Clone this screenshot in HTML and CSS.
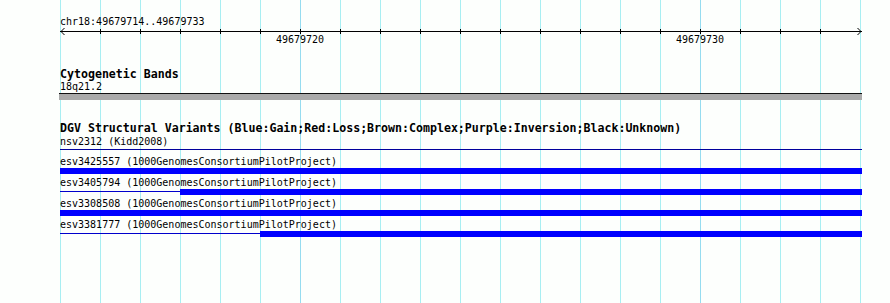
FILE: index.html
```html
<!DOCTYPE html>
<html>
<head>
<meta charset="utf-8">
<link rel="stylesheet" href="styles.css">
</head>
<body>
<div class="view">
  <div class="content">
    <div class="loc">chr18:49679714..49679733</div>
    <svg class="ruler" width="803" height="8" viewBox="0 0 803 8">
      <line x1="0" y1="4.5" x2="802" y2="4.5" stroke="#000" stroke-width="1"/>
      <polyline points="4.5,1 1,4.5 4.5,8" fill="none" stroke="#000" stroke-width="1"/>
      <polyline points="797.5,1 801,4.5 797.5,8" fill="none" stroke="#000" stroke-width="1"/>
      <g stroke="#000" stroke-width="1">
        <line x1="40.5" y1="2" x2="40.5" y2="7"/>
        <line x1="80.5" y1="2" x2="80.5" y2="7"/>
        <line x1="120.5" y1="2" x2="120.5" y2="7"/>
        <line x1="160.5" y1="2" x2="160.5" y2="7"/>
        <line x1="200.5" y1="2" x2="200.5" y2="7"/>
        <line x1="240.5" y1="2" x2="240.5" y2="7"/>
        <line x1="280.5" y1="2" x2="280.5" y2="7"/>
        <line x1="320.5" y1="2" x2="320.5" y2="7"/>
        <line x1="360.5" y1="2" x2="360.5" y2="7"/>
        <line x1="400.5" y1="2" x2="400.5" y2="7"/>
        <line x1="440.5" y1="2" x2="440.5" y2="7"/>
        <line x1="480.5" y1="2" x2="480.5" y2="7"/>
        <line x1="520.5" y1="2" x2="520.5" y2="7"/>
        <line x1="560.5" y1="2" x2="560.5" y2="7"/>
        <line x1="600.5" y1="2" x2="600.5" y2="7"/>
        <line x1="640.5" y1="2" x2="640.5" y2="7"/>
        <line x1="680.5" y1="2" x2="680.5" y2="7"/>
        <line x1="720.5" y1="2" x2="720.5" y2="7"/>
        <line x1="760.5" y1="2" x2="760.5" y2="7"/>
      </g>
    </svg>
    <div class="labels">
      <span class="tick-label first">49679720</span>
      <span class="tick-label second">49679730</span>
    </div>

    <div class="track-title cyto">Cytogenetic Bands</div>
    <div class="label">18q21.2</div>
    <div class="band"></div>

    <div class="track-title dgv">DGV Structural Variants (Blue:Gain;Red:Loss;Brown:Complex;Purple:Inversion;Black:Unknown)</div>

    <div class="feat nsv">
      <div class="label">nsv2312 (Kidd2008)</div>
      <div class="glyph"><div class="thin dark full"></div></div>
    </div>

    <div class="feat">
      <div class="label">esv3425557 (1000GenomesConsortiumPilotProject)</div>
      <div class="glyph gap"><div class="thick"></div></div>
    </div>

    <div class="feat">
      <div class="label">esv3405794 (1000GenomesConsortiumPilotProject)</div>
      <div class="glyph gap"><div class="thin" style="width:120px"></div><div class="thick"></div></div>
    </div>

    <div class="feat">
      <div class="label">esv3308508 (1000GenomesConsortiumPilotProject)</div>
      <div class="glyph gap"><div class="thick"></div></div>
    </div>

    <div class="feat">
      <div class="label">esv3381777 (1000GenomesConsortiumPilotProject)</div>
      <div class="glyph gap"><div class="thin" style="width:200px"></div><div class="thick"></div></div>
    </div>
  </div>
</div>
</body>
</html>
```

FILE: styles.css
```css
html, body {
  margin: 0;
  padding: 0;
  background: #fdfffd;
}

.view {
  width: 890px;
  height: 303px;
  overflow: hidden;
  padding-top: 16px;
  box-sizing: border-box;
  background-color: #fdfffd;
  background-image:
    linear-gradient(to right, #96dcf0 0 1px, transparent 1px),
    linear-gradient(to right, #96dcf0 0 1px, transparent 1px),
    repeating-linear-gradient(to right, #a8eef2 0 1px, transparent 1px 40px);
  background-repeat: no-repeat;
  background-size: 1px 100%, 1px 100%, 801px 100%;
  background-position: 300px 0, 700px 0, 60px 0;
  font-family: "DejaVu Sans Mono", monospace;
  font-size: 10px;
  color: #000;
}

.content {
  margin-left: 60px;
  width: 802px;
}

.loc {
  line-height: 11px;
  height: 11px;
  white-space: nowrap;
}

.ruler {
  display: block;
  overflow: visible;
}

.labels {
  display: grid;
  grid-template-columns: repeat(20, 40px);
  line-height: 11px;
  height: 11px;
  margin-top: -1px;
}

.tick-label {
  text-align: center;
  white-space: nowrap;
}

.tick-label.first {
  grid-column: 6 / 8;
}

.tick-label.second {
  grid-column: 16 / 18;
}

.track-title {
  font-weight: bold;
  font-size: 11.6px;
  line-height: 14px;
  height: 14px;
  white-space: nowrap;
}

.track-title.cyto {
  margin-top: 22px;
}

.track-title.dgv {
  margin-top: 21px;
}

.label {
  line-height: 11px;
  height: 11px;
  white-space: nowrap;
}

.band {
  margin-top: 1px;
  margin-left: -1px;
  width: 803px;
  height: 6px;
  border-top: 1px solid #111;
  background: #aaaaaa;
}

.feat {
  margin-top: 3px;
}

.feat.nsv {
  margin-top: 1px;
}

.glyph {
  display: flex;
  height: 6px;
  width: 802px;
}

.glyph.gap {
  margin-top: 1px;
}

.thin {
  flex: none;
  height: 1px;
  margin-top: 2px;
  background: #0000cc;
}

.thin.dark {
  background: #00009c;
}

.thin.full {
  flex: 1;
}

.thick {
  flex: 1;
  height: 6px;
  background: #0000ff;
}
```
